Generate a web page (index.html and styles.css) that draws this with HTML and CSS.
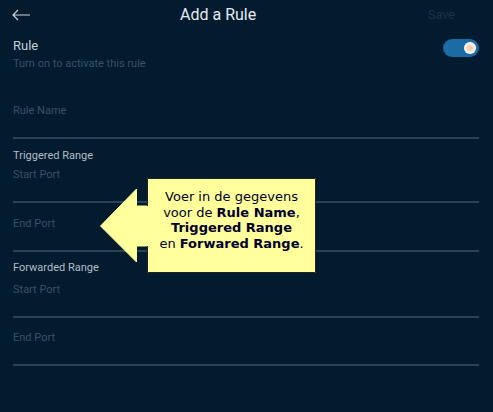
FILE: index.html
```html
<!DOCTYPE html>
<html>
<head>
<meta charset="utf-8">
<link rel="stylesheet" href="styles.css">
</head>
<body>
<div class="screen">
  <header class="topbar">
    <svg class="back" width="20" height="12" viewBox="0 0 20 12"><path d="M19 6H2M7 1L2 6L7 11" fill="none" stroke="#c9d1d8" stroke-width="1.2"/></svg>
    <div class="title">Add a Rule</div>
    <div class="save">Save</div>
  </header>

  <section class="rule">
    <div class="rule-text">
      <div class="rule-label">Rule</div>
      <div class="rule-sub">Turn on to activate this rule</div>
    </div>
    <div class="toggle"><span class="knob"></span></div>
  </section>

  <div class="field name-field">
    <div class="placeholder">Rule Name</div>
    <div class="line"></div>
  </div>

  <div class="group-label triggered">Triggered Range</div>
  <div class="field first triggered-start">
    <div class="placeholder">Start Port</div>
    <div class="line"></div>
  </div>
  <div class="field">
    <div class="placeholder">End Port</div>
    <div class="line"></div>
  </div>

  <div class="group-label forwarded">Forwarded Range</div>
  <div class="field first forwarded-start">
    <div class="placeholder">Start Port</div>
    <div class="line"></div>
  </div>
  <div class="field last">
    <div class="placeholder">End Port</div>
    <div class="line"></div>
  </div>

  <div class="callout">
    <svg class="callout-shape" width="218" height="96" viewBox="0 0 218 96">
      <polygon points="0.5,48 36.5,11 36.5,28 47.5,28 47.5,0.5 215.5,0.5 215.5,94.5 47.5,94.5 47.5,68 36.5,68 36.5,84" fill="#ffff9c" stroke="#ffff9c" stroke-width="1"/>
      <path d="M47.5 28V0.5H215.5V94.5H47.5V68" fill="none" stroke="#222" stroke-width="1"/>
    </svg>
    <div class="callout-text">Voer in de gegevens<br>voor de <b>Rule Name</b>,<br><b>Triggered Range</b><br>en <b>Forwared Range</b>.</div>
  </div>
</div>
</body>
</html>
```

FILE: styles.css
```css
html, body {
  margin: 0;
  padding: 0;
  background: #021b2e;
}

.screen {
  position: relative;
  width: 493px;
  height: 412px;
  background: #021b2e;
  font-family: Roboto, "Liberation Sans", sans-serif;
  overflow: hidden;
}

.topbar {
  display: flex;
  align-items: center;
  height: 29px;
  padding-left: 11px;
}

.back {
  display: block;
  flex: none;
}

.title {
  margin-left: 149px;
  font-size: 16px;
  color: #e6eaee;
  width: 72px;
  text-align: center;
  white-space: nowrap;
}

.save {
  margin-left: 176px;
  font-size: 12.5px;
  color: #1c3246;
}

.rule {
  display: flex;
  align-items: flex-start;
  justify-content: space-between;
  padding: 9px 14px 0 13px;
}

.rule-label {
  font-size: 13px;
  line-height: 16px;
  color: #c6ced6;
}

.rule-sub {
  margin-top: 3px;
  font-size: 11px;
  line-height: 14px;
  color: #3a5165;
}

.toggle {
  position: relative;
  width: 36px;
  height: 18px;
  margin-top: 1px;
  border-radius: 9px;
  background: #1b6ca4;
}

.knob {
  position: absolute;
  right: 3px;
  top: 3px;
  width: 12px;
  height: 12px;
  border-radius: 50%;
  background: radial-gradient(circle at 50% 50%, #f4c39a 0, #f8dcc4 35%, #ffffff 70%);
}

.field {
  margin: 14px 14px 0 13px;
}

.field.name-field {
  margin-top: 33px;
}

.field.triggered-start {
  margin-top: 5px;
}

.field.forwarded-start {
  margin-top: 8px;
}

.field.last {
  margin-top: 13px;
}

.placeholder {
  font-size: 11px;
  line-height: 14px;
  color: #3a5165;
}

.line {
  margin-top: 19px;
  height: 2px;
  background: #2b4357;
}

.group-label {
  margin: 10px 0 0 13px;
  font-size: 11px;
  line-height: 14px;
  color: #b3bdc7;
}

.group-label.forwarded {
  margin-top: 9px;
}

.callout {
  position: absolute;
  left: 100px;
  top: 178px;
  width: 218px;
  height: 96px;
}

.callout-shape {
  position: absolute;
  left: 0;
  top: 0;
}

.callout-text {
  position: absolute;
  left: 48px;
  top: 11px;
  width: 167px;
  text-align: center;
  font-family: "DejaVu Sans", Verdana, sans-serif;
  font-size: 13px;
  line-height: 15.5px;
  color: #00002a;
  white-space: nowrap;
}

.callout-text b {
  font-weight: bold;
}
```
